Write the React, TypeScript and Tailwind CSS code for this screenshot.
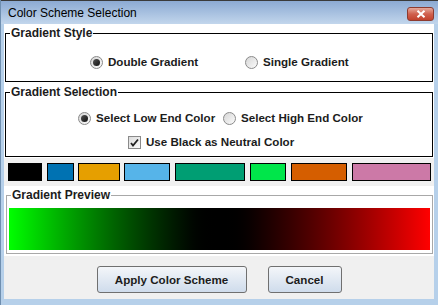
import React from "react";

function Radio({ checked }: { checked?: boolean }) {
  return (
    <span className="w-[13px] h-[13px] rounded-full border border-[#8a8a8a] bg-gradient-to-br from-[#d6d6d6] to-[#fbfbfb] flex items-center justify-center shrink-0">
      {checked ? <span className="w-[7px] h-[7px] rounded-full bg-gradient-to-br from-[#555] to-[#111]" /> : null}
    </span>
  );
}

function Checkbox() {
  return (
    <span className="w-[13px] h-[13px] border border-[#8a8a8a] bg-gradient-to-br from-[#dcdcdc] to-[#fbfbfb] flex items-center justify-center shrink-0">
      <svg width="9" height="9" viewBox="0 0 9 9">
        <path d="M1 5 L3 7.5 L8 1.5" stroke="#222" strokeWidth="1.8" fill="none" />
      </svg>
    </span>
  );
}

const swatches = [
  { c: "bg-[#000000]", w: "w-[34px] ml-0" },
  { c: "bg-[#0072b2]", w: "w-[27px] ml-[5px]" },
  { c: "bg-[#e69f00]", w: "w-[42px] ml-[4px]" },
  { c: "bg-[#56b4e9]", w: "w-[46px] ml-[4px]" },
  { c: "bg-[#009e73]", w: "w-[70px] ml-[5px]" },
  { c: "bg-[#00e64a]", w: "w-[36px] ml-[5px]" },
  { c: "bg-[#d55e00]", w: "w-[56px] ml-[5px]" },
  { c: "bg-[#cc79a7]", w: "w-[79px] ml-[5px]" },
];

export default function App() {
  return (
    <div className="w-[438px] h-[305px] flex flex-col bg-[#b6d0ea] font-['Liberation_Sans',Arial,sans-serif] text-[#1c1c1c] overflow-hidden border-l border-[#6f8fb0]">
      {/* title bar */}
      <div className="h-[24px] shrink-0 border-t border-[#3a3a3a] bg-gradient-to-b from-[#8caad3] to-[#c2d6ec] flex items-center pl-[7px] pr-[4px]">
        <span className="text-[12px] leading-[14px] text-black">Color Scheme Selection</span>
        <span className="ml-auto mt-[3px] w-[27px] h-[14px] rounded-[3px] border border-[#8d3b30] bg-gradient-to-b from-[#e4a99c] via-[#d0604e] to-[#c2412c] flex items-center justify-center">
          <svg width="10" height="8" viewBox="0 0 10 8">
            <path d="M1.5 0.8 L8.5 7.2 M8.5 0.8 L1.5 7.2" stroke="#ffffff" strokeWidth="2" />
          </svg>
        </span>
      </div>
      {/* body */}
      <div className="flex-1 ml-[3px] mr-[4px] mb-[6px] bg-[#f0f0f0] flex flex-col">
        {/* Gradient Style */}
        <div className="bg-white pt-[2px] pb-[2px] pl-[1px] pr-[1px]">
          <fieldset className="border border-black h-[56px]">
            <legend className="ml-[4px] px-[1px] text-[12px] leading-[14px] font-bold">Gradient Style</legend>
            <div className="mt-[14px] h-[16px] flex items-center pl-[84px] text-[11.6px] font-bold">
              <div className="w-[155px] flex items-center gap-[5px]">
                <Radio checked />
                <span>Double Gradient</span>
              </div>
              <div className="flex items-center gap-[5px]">
                <Radio />
                <span>Single Gradient</span>
              </div>
            </div>
          </fieldset>
        </div>
        {/* Gradient Selection */}
        <div className="bg-white pt-[1px] pb-[1px] pl-[1px] pr-[1px]">
          <fieldset className="border border-black h-[72px]">
            <legend className="ml-[4px] px-[1px] text-[12px] leading-[14px] font-bold">Gradient Selection</legend>
            <div className="mt-[11px] h-[16px] flex items-center pl-[72px] text-[11.6px] font-bold">
              <div className="w-[145px] flex items-center gap-[5px]">
                <Radio checked />
                <span>Select Low End Color</span>
              </div>
              <div className="flex items-center gap-[5px]">
                <Radio />
                <span>Select High End Color</span>
              </div>
            </div>
            <div className="mt-[8px] h-[16px] flex items-center pl-[122px] gap-[5px] text-[11.6px] font-bold">
              <Checkbox />
              <span>Use Black as Neutral Color</span>
            </div>
          </fieldset>
        </div>
        {/* swatches */}
        <div className="mt-[5px] h-[18px] flex pl-[4px]">
          {swatches.map((s, i) => (
            <div key={i} className={`${s.c} ${s.w} h-[18px] border border-black shrink-0`} />
          ))}
        </div>
        {/* Gradient Preview */}
        <div className="mt-[5px] bg-white pt-[2px] pb-[2px] pl-[2px] pr-[1px]">
          <fieldset className="border border-[#a8a8a8] h-[66px]">
            <legend className="ml-[4px] px-[1px] text-[12px] leading-[14px] font-bold">Gradient Preview</legend>
            <div className="mt-[6px] mx-[2px] h-[42px] bg-gradient-to-r from-[#00ff00] via-[#000000] to-[#ff0000]" />
          </fieldset>
        </div>
        {/* buttons */}
        <div className="mt-[10px] flex justify-center gap-[21px]">
          <button className="w-[150px] h-[27px] rounded-[3px] border border-[#707070] bg-gradient-to-b from-[#f4f6f9] to-[#cfdcec] text-[11.6px] font-bold text-[#1c1c1c]">
            Apply Color Scheme
          </button>
          <button className="w-[74px] h-[27px] rounded-[3px] border border-[#707070] bg-gradient-to-b from-[#f4f6f9] to-[#cfdcec] text-[11.6px] font-bold text-[#1c1c1c]">
            Cancel
          </button>
        </div>
      </div>
    </div>
  );
}
